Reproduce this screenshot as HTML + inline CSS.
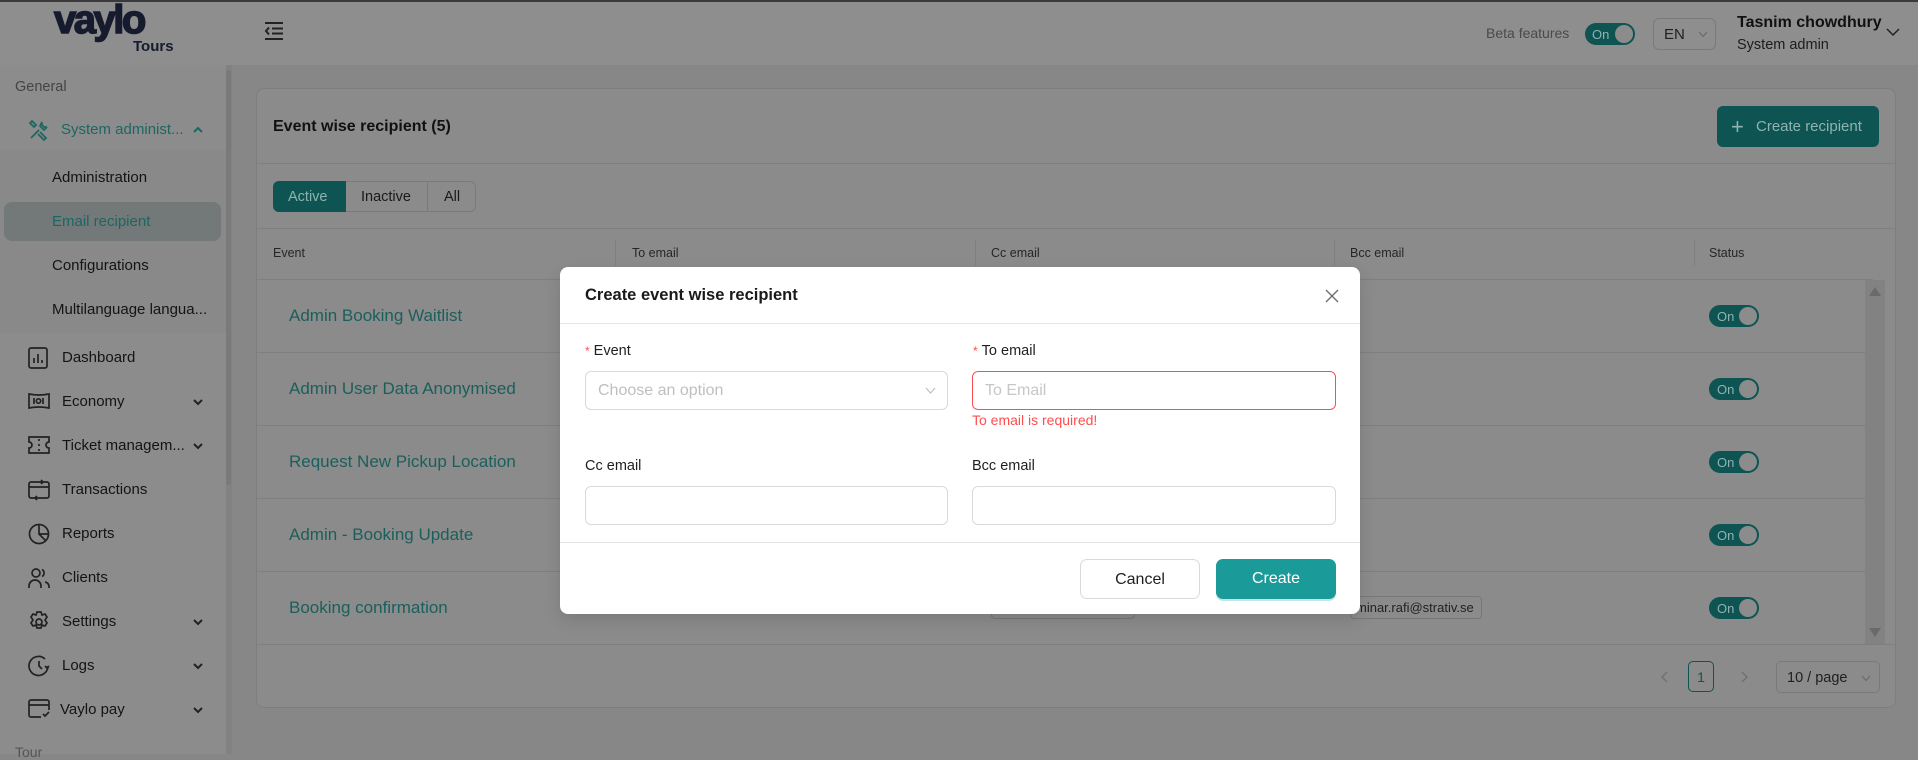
<!DOCTYPE html>
<html><head><meta charset="utf-8">
<style>
*{box-sizing:border-box;margin:0;padding:0}
body{width:1918px;height:754px;overflow:hidden;background:#878787;font-family:"Liberation Sans",sans-serif;color:#141414;position:relative}
.abs{position:absolute}
.topline{left:0;top:0;width:1918px;height:2px;background:#3a3a3a}
.header{left:0;top:2px;width:1918px;height:63px;background:#8e8e8e}
.sidebar{left:0;top:65px;width:226px;height:689px;background:#8c8c8c}
.sub{left:0;top:150px;width:226px;height:183px;background:#898989}
.sbar{left:226px;top:65px;width:6px;height:689px;background:#828282}
.sthumb{left:226px;top:70px;width:5px;height:415px;background:#7a7a7a;border-radius:3px}
.nav{position:absolute;left:0;font-size:15px;color:#141414;line-height:20px}
.nav svg.ic{position:absolute;left:28px;top:-1px}
.nav span{position:absolute;left:62px;white-space:nowrap}
.nav svg.chev{position:absolute;left:192px;top:4px}
.card{left:256px;top:88px;width:1640px;height:620px;background:#8b8b8b;border:1px solid #7e7e7e;border-radius:8px}
.hl{position:absolute;height:1px;background:#7f7f7f}
.th{position:absolute;top:246px;font-size:12.5px;color:#262626}
.vs{position:absolute;top:240px;width:1px;height:26px;background:#7f7f7f}
.ev{position:absolute;left:289px;font-size:17px;color:#1b5f5c}
.tog{position:absolute;left:1709px;width:50px;height:22px;background:#0d5452;border-radius:11px}
.tog b{position:absolute;left:8px;top:4px;font-size:13px;font-weight:normal;color:#8fb3b1}
.tog i{position:absolute;right:2px;top:2px;width:18px;height:18px;border-radius:50%;background:#8c8c8c}
.modal{left:560px;top:267px;width:800px;height:347px;background:#fff;border-radius:8px;box-shadow:0 6px 16px rgba(0,0,0,.12)}
.lbl{position:absolute;font-size:14.5px;color:#1f1f1f}
.lbl em{color:#ff4d4f;font-style:normal;font-size:12px;margin-right:4px}
.inp{position:absolute;height:39px;border:1px solid #d9d9d9;border-radius:6px;background:#fff}
</style></head><body>
<div class="abs topline"></div>
<div class="abs header"></div>
<div class="abs" style="left:54px;top:-2px;font-size:40px;font-weight:bold;color:#161b2e;letter-spacing:-2.5px;-webkit-text-stroke:1.5px #161b2e">vaylo</div>
<div class="abs" style="left:133px;top:38px;font-size:15px;font-weight:bold;color:#161b2e">Tours</div>
<svg class="abs" style="left:264px;top:22px" width="20" height="18" viewBox="0 0 20 18"><g stroke="#222" stroke-width="2" fill="none"><path d="M1 1h18M8 6.5h11M8 11.5h11M1 17h18"/><path d="M5 5.5l-3 3.5 3 3.5"/></g></svg>
<div class="abs" style="left:1486px;top:25px;font-size:14px;color:#4a4a4a">Beta features</div>
<div class="tog" style="left:1585px;top:23px;width:50px;height:22px"><b style="left:7px;top:4px">On</b><i></i></div>
<div class="abs" style="left:1653px;top:18px;width:63px;height:32px;border:1px solid #7a7a7a;border-radius:6px;font-size:15px;color:#202020;padding:7px 0 0 10px">EN <svg style="position:absolute;left:44px;top:12px" width="10" height="7"><path d="M1 1l4 4.5L9 1" stroke="#6a6a6a" stroke-width="1.1" fill="none"/></svg></div>
<div class="abs" style="left:1737px;top:14px;font-size:16px;font-weight:bold;color:#111">Tasnim chowdhury</div>
<div class="abs" style="left:1737px;top:37px;font-size:14.5px;color:#1c1c1c">System admin</div>
<svg class="abs" style="left:1886px;top:28px" width="14" height="9" viewBox="0 0 14 9"><path d="M1 1l6 6 6-6" stroke="#222" stroke-width="1.5" fill="none"/></svg>

<div class="abs sidebar"></div>
<div class="abs sub"></div>
<div class="abs sbar"></div>
<div class="abs sthumb"></div>
<div class="abs" style="left:15px;top:79px;font-size:14.5px;color:#444">General</div>
<div class="nav" style="top:120px;color:#1c6763"><svg class="ic" width="22" height="22" viewBox="0 0 22 22" fill="none" stroke="#1c6763" stroke-width="1.8"><path d="M3 19l8-8M14 3a4 4 0 0 0 5 5l-3 3-4-4z"/><path d="M4 2l4 4-2 2-4-4zM12 13l6 6-2 2-6-6"/></svg><span style="left:61px">System administ...</span><svg class="chev" width="12" height="12" viewBox="0 0 12 12"><path d="M2 8l4-4 4 4" stroke="#1c6763" stroke-width="2" fill="none"/></svg></div>
<div class="nav" style="top:168px"><span style="left:52px">Administration</span></div>
<div class="abs" style="left:4px;top:202px;width:217px;height:39px;background:#737878;border-radius:8px"></div>
<div class="nav" style="top:212px;color:#1c6763"><span style="left:52px">Email recipient</span></div>
<div class="nav" style="top:256px"><span style="left:52px">Configurations</span></div>
<div class="nav" style="top:300px"><span style="left:52px">Multilanguage langua...</span></div>

<div class="nav" style="top:348px"><svg class="ic" width="20" height="22" viewBox="0 0 20 22" fill="none" stroke="#222" stroke-width="1.7"><rect x="1" y="1" width="18" height="20" rx="2"/><path d="M6 16v-5M10 16V7M14 16v-3"/></svg><span>Dashboard</span></div>
<div class="nav" style="top:392px"><svg class="ic" width="22" height="20" viewBox="0 0 22 20" fill="none" stroke="#222" stroke-width="1.7"><path d="M1 3q10 2 20 0v14q-10-2-20 0z"/><path d="M6 7v6M15 7v6"/><circle cx="10.5" cy="10" r="2.2"/></svg><span>Economy</span><svg class="chev" width="12" height="12" viewBox="0 0 12 12"><path d="M2 4l4 4 4-4" stroke="#222" stroke-width="2" fill="none"/></svg></div>
<div class="nav" style="top:436px"><svg class="ic" width="22" height="20" viewBox="0 0 22 20" fill="none" stroke="#222" stroke-width="1.7"><path d="M1 2h20v5a3 3 0 0 0 0 6v5H1v-5a3 3 0 0 0 0-6z"/><path d="M11 4v2M11 9v2M11 14v2"/></svg><span>Ticket managem...</span><svg class="chev" width="12" height="12" viewBox="0 0 12 12"><path d="M2 4l4 4 4-4" stroke="#222" stroke-width="2" fill="none"/></svg></div>
<div class="nav" style="top:480px"><svg class="ic" width="22" height="22" viewBox="0 0 22 22" fill="none" stroke="#222" stroke-width="1.7"><rect x="1" y="3" width="20" height="16" rx="2"/><path d="M1 8h20M13 1l2 2-2 2M9 21l-2-2 2-2"/></svg><span>Transactions</span></div>
<div class="nav" style="top:524px"><svg class="ic" width="22" height="22" viewBox="0 0 22 22" fill="none" stroke="#222" stroke-width="1.7"><circle cx="11" cy="11" r="9.5"/><path d="M11 1.5V11h9.5M11 11l6.5 6.5"/></svg><span>Reports</span></div>
<div class="nav" style="top:568px"><svg class="ic" width="22" height="22" viewBox="0 0 22 22" fill="none" stroke="#222" stroke-width="1.7"><circle cx="8" cy="6" r="4"/><path d="M1 21v-2a6 6 0 0 1 12 0v2M14 2.5a4 4 0 0 1 0 7M17 15a5 5 0 0 1 4 4v2"/></svg><span>Clients</span></div>
<div class="nav" style="top:612px"><svg class="ic" width="22" height="22" viewBox="0 0 22 22" fill="none" stroke="#222" stroke-width="1.7"><path d="M9 1h4l1 3 3-1 2 3-2 3 2 3-2 3-3-1-1 3H9l-1-3-3 1-2-3 2-3-2-3 2-3 3 1z"/><circle cx="11" cy="11" r="3"/></svg><span>Settings</span><svg class="chev" width="12" height="12" viewBox="0 0 12 12"><path d="M2 4l4 4 4-4" stroke="#222" stroke-width="2" fill="none"/></svg></div>
<div class="nav" style="top:656px"><svg class="ic" width="22" height="22" viewBox="0 0 22 22" fill="none" stroke="#222" stroke-width="1.7"><path d="M20 11a9.5 9.5 0 1 1-3-7"/><path d="M11 6v5l3 3M17 11l2 2 2-2"/></svg><span>Logs</span><svg class="chev" width="12" height="12" viewBox="0 0 12 12"><path d="M2 4l4 4 4-4" stroke="#222" stroke-width="2" fill="none"/></svg></div>
<div class="nav" style="top:700px"><svg class="ic" width="24" height="20" viewBox="0 0 24 20" fill="none" stroke="#222" stroke-width="1.7"><path d="M13 18H3a2 2 0 0 1-2-2V3a2 2 0 0 1 2-2h16a2 2 0 0 1 2 2v8M1 6h20M15 15l2 2 4-4"/></svg><span style="left:60px">Vaylo pay</span><svg class="chev" width="12" height="12" viewBox="0 0 12 12"><path d="M2 4l4 4 4-4" stroke="#222" stroke-width="2" fill="none"/></svg></div>
<div class="abs" style="left:15px;top:744px;font-size:14px;color:#555">Tour</div>

<div class="abs card"></div>
<div class="abs" style="left:273px;top:118px;font-size:16px;font-weight:bold;color:#111">Event wise recipient (5)</div>
<div class="abs" style="left:1717px;top:106px;width:162px;height:41px;background:#0d5452;border-radius:6px;color:#8fb3b1;font-size:15px"><span style="font-size:22px;position:absolute;left:14px;top:8px">+</span><span style="position:absolute;left:39px;top:12px">Create recipient</span></div>
<div class="hl" style="left:257px;top:163px;width:1638px"></div>
<div class="abs" style="left:273px;top:181px;width:203px;height:31px;border:1px solid #7a7a7a;border-radius:6px"></div>
<div class="abs" style="left:273px;top:181px;width:73px;height:31px;background:#0d5452;border-radius:6px 0 0 6px;color:#8fb3b1;font-size:14.5px;padding:8px 0 0 15px">Active</div>
<div class="abs" style="left:346px;top:181px;width:82px;height:31px;border-right:1px solid #7a7a7a;font-size:14.5px;padding:8px 0 0 15px;color:#1a1a1a">Inactive</div>
<div class="abs" style="left:444px;top:189px;font-size:14.5px;color:#1a1a1a">All</div>
<div class="hl" style="left:257px;top:228px;width:1638px"></div>
<div class="th" style="left:273px">Event</div><div class="th" style="left:632px">To email</div><div class="th" style="left:991px">Cc email</div><div class="th" style="left:1350px">Bcc email</div><div class="th" style="left:1709px">Status</div>
<div class="vs" style="left:615px"></div><div class="vs" style="left:975px"></div><div class="vs" style="left:1334px"></div><div class="vs" style="left:1694px"></div>
<div class="hl" style="left:257px;top:279px;width:1616px"></div>
<div class="hl" style="left:257px;top:352px;width:1616px"></div>
<div class="hl" style="left:257px;top:425px;width:1616px"></div>
<div class="hl" style="left:257px;top:498px;width:1616px"></div>
<div class="hl" style="left:257px;top:571px;width:1616px"></div>
<div class="hl" style="left:257px;top:644px;width:1638px"></div>
<div class="ev" style="top:306px">Admin Booking Waitlist</div>
<div class="ev" style="top:379px">Admin User Data Anonymised</div>
<div class="ev" style="top:452px">Request New Pickup Location</div>
<div class="ev" style="top:525px">Admin - Booking Update</div>
<div class="ev" style="top:598px">Booking confirmation</div>
<div class="tog" style="top:305px"><b>On</b><i></i></div>
<div class="tog" style="top:378px"><b>On</b><i></i></div>
<div class="tog" style="top:451px"><b>On</b><i></i></div>
<div class="tog" style="top:524px"><b>On</b><i></i></div>
<div class="tog" style="top:597px"><b>On</b><i></i></div>
<div class="abs" style="left:991px;top:596px;width:144px;height:23px;border:1px solid #777;border-radius:4px"></div>
<div class="abs" style="left:1350px;top:596px;width:132px;height:23px;border:1px solid #777;border-radius:4px;font-size:13px;padding:3px 0 0 5px;color:#222">minar.rafi@strativ.se</div>
<div class="abs" style="left:1865px;top:280px;width:20px;height:364px;background:#828282"></div>
<svg class="abs" style="left:1868px;top:286px" width="14" height="10"><path d="M1 10L7 1l6 9z" fill="#6a6a6a"/></svg>
<svg class="abs" style="left:1868px;top:628px" width="14" height="10"><path d="M1 0l6 9 6-9z" fill="#6a6a6a"/></svg>
<svg class="abs" style="left:1660px;top:671px" width="8" height="12"><path d="M7 1L2 6l5 5" stroke="#6f6f6f" stroke-width="1.3" fill="none"/></svg>
<div class="abs" style="left:1688px;top:661px;width:26px;height:31px;border:1px solid #0d5452;border-radius:5px;font-size:14px;color:#0d5452;text-align:center;padding-top:7px">1</div>
<svg class="abs" style="left:1741px;top:671px" width="8" height="12"><path d="M1 1l5 5-5 5" stroke="#6f6f6f" stroke-width="1.3" fill="none"/></svg>
<div class="abs" style="left:1776px;top:661px;width:104px;height:32px;border:1px solid #7a7a7a;border-radius:5px;font-size:14.5px;color:#202020;padding:8px 0 0 10px">10 / page <svg style="position:absolute;left:84px;top:13px" width="10" height="7"><path d="M1 1l4 4.5L9 1" stroke="#6a6a6a" stroke-width="1.1" fill="none"/></svg></div>

<div class="abs modal">
  <div class="abs" style="left:25px;top:19px;font-size:16.5px;font-weight:bold;color:#1a1a1a">Create event wise recipient</div>
  <svg class="abs" style="left:765px;top:22px" width="14" height="14"><path d="M1 1l12 12M13 1L1 13" stroke="#6e6e6e" stroke-width="1.4"/></svg>
  <div class="abs" style="left:0;top:56px;width:800px;height:1px;background:#e5e5e5"></div>
  <div class="lbl" style="left:25px;top:76px"><em>*</em>Event</div>
  <div class="lbl" style="left:413px;top:76px"><em>*</em>To email</div>
  <div class="inp" style="left:25px;top:104px;width:363px"><span style="position:absolute;left:12px;top:10px;font-size:16px;color:#bfbfbf">Choose an option</span><svg style="position:absolute;right:11px;top:15px" width="11" height="8"><path d="M1 1l4.5 5L10 1" stroke="#bfbfbf" stroke-width="1.2" fill="none"/></svg></div>
  <div class="inp" style="left:412px;top:104px;width:364px;border-color:#ff4d4f"><span style="position:absolute;left:12px;top:10px;font-size:16px;color:#c7c7c7">To Email</span></div>
  <div class="abs" style="left:412px;top:145px;font-size:14px;color:#ff4d4f">To email is required!</div>
  <div class="lbl" style="left:25px;top:191px">Cc email</div>
  <div class="lbl" style="left:412px;top:191px">Bcc email</div>
  <div class="inp" style="left:25px;top:219px;width:363px"></div>
  <div class="inp" style="left:412px;top:219px;width:364px"></div>
  <div class="abs" style="left:0;top:275px;width:800px;height:1px;background:#e5e5e5"></div>
  <div class="abs" style="left:520px;top:292px;width:120px;height:40px;border:1px solid #d9d9d9;border-radius:7px;background:#fff;text-align:center;font-size:16px;color:#1f1f1f;padding-top:11px">Cancel</div>
  <div class="abs" style="left:656px;top:292px;width:120px;height:40px;border-radius:7px;background:#1a9a98;text-align:center;font-size:16px;color:#fff;padding-top:11px;box-shadow:0 2px 0 rgba(26,154,152,.25)">Create</div>
</div>
</body></html>
